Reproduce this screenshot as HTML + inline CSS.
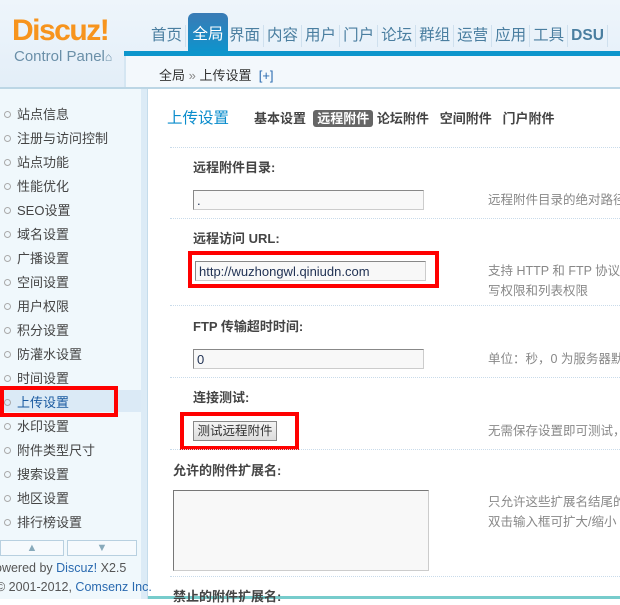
<!DOCTYPE html><html><head><meta charset="utf-8"><style>
*{margin:0;padding:0;box-sizing:border-box}
body{width:620px;height:599px;overflow:hidden;background:#fff;font:12px "Liberation Sans","Noto Sans CJK SC",sans-serif;color:#333;position:relative}
.a{position:absolute}
.hd{left:0;top:0;width:620px;height:88px;background:linear-gradient(#eef5fb,#e3eef8)}
.logo{left:12px;top:14px;font:bold 30px "Liberation Sans",sans-serif;color:#f7941d;letter-spacing:-1.5px}
.cp{left:14px;top:48px;font-size:15px;color:#6a8fa8}
.nav{left:148px;top:18px;font-size:15.5px;color:#4a7ea0;white-space:nowrap}
.nav span{display:inline-block;padding:0 3px;border-right:1px solid #cfe0ee;height:22px;line-height:22px}
.act{left:188px;top:13px;width:40px;height:38px;background:linear-gradient(#3a7bb5,#0f93cc);border-radius:6px 6px 0 0;color:#fff;font-size:15.5px;text-align:center;line-height:44px}
.bar{left:124px;top:51px;width:496px;height:5px;background:#0d96cc}
.bc{left:124px;top:56px;width:496px;height:32px;background:#f3f8fc;padding:9px 0 0 33px;font-size:13px;color:#333;border-left:2px solid #d5e6f2}
.hl{left:0;top:87px;width:620px;height:2px;background:#bcd6e5}
.sb{left:0;top:89px;width:141px;height:510px;background:#f0f8fc}
.strip{left:141px;top:89px;width:7px;height:510px;background:#dcebf6;border-right:1px solid #c5dceb}
.it{left:4px;font-size:13px;color:#444;white-space:nowrap}
.it i{display:inline-block;width:7px;height:7px;border:1px solid #aaa;border-radius:50%;margin-right:6px;vertical-align:1px}
.red{border:4px solid #f00}
.lab{font-weight:bold;font-size:13px;color:#444}
.inp{width:231px;height:20px;border:1px solid #888;border-right-color:#ccc;border-bottom-color:#ccc;background:#f8f8f8;font-size:13px;padding:2px 3px;color:#235}
.tip{left:488px;color:#888;font-size:12.5px;line-height:20px;white-space:nowrap}
.dot{left:170px;width:450px;border-top:1px dotted #c9dbea}
</style></head><body>
<div class="a hd"></div>
<div class="a logo">Discuz!</div>
<div class="a cp">Control Panel<span style="font-size:12px">⌂</span></div>
<div class="a bar"></div>
<div class="a nav"><span>首页</span><span style="width:40px;border:0"></span><span>界面</span><span>内容</span><span>用户</span><span>门户</span><span>论坛</span><span>群组</span><span>运营</span><span>应用</span><span>工具</span><span style="font-weight:bold">DSU</span></div>
<div class="a act">全局</div>
<div class="a bc">全局 <span style="color:#888">»</span> 上传设置 &nbsp;<span style="color:#2a6ab0">[+]</span></div>
<div class="a hl"></div>
<div class="a sb"></div>
<div class="a strip"></div>
<div class="a" style="left:0;top:390px;width:141px;height:22px;background:#dbeaf6"></div>
<div class="a it" style="top:104px"><i></i>站点信息</div>
<div class="a it" style="top:128px"><i></i>注册与访问控制</div>
<div class="a it" style="top:152px"><i></i>站点功能</div>
<div class="a it" style="top:176px"><i></i>性能优化</div>
<div class="a it" style="top:200px"><i></i>SEO设置</div>
<div class="a it" style="top:224px"><i></i>域名设置</div>
<div class="a it" style="top:248px"><i></i>广播设置</div>
<div class="a it" style="top:272px"><i></i>空间设置</div>
<div class="a it" style="top:296px"><i></i>用户权限</div>
<div class="a it" style="top:320px"><i></i>积分设置</div>
<div class="a it" style="top:344px"><i></i>防灌水设置</div>
<div class="a it" style="top:368px"><i></i>时间设置</div>
<div class="a it" style="top:392px;color:#1a5aa0"><i></i>上传设置</div>
<div class="a it" style="top:416px"><i></i>水印设置</div>
<div class="a it" style="top:440px"><i></i>附件类型尺寸</div>
<div class="a it" style="top:464px"><i></i>搜索设置</div>
<div class="a it" style="top:488px"><i></i>地区设置</div>
<div class="a it" style="top:512px"><i></i>排行榜设置</div>
<div class="a red" style="left:0;top:386px;width:118px;height:31px"></div>
<div class="a" style="left:0;top:540px;width:64px;height:16px;border:1px solid #b8d0e0;background:#f6fafd;color:#8ab;text-align:center;font-size:11px;line-height:14px">▲</div>
<div class="a" style="left:67px;top:540px;width:70px;height:16px;border:1px solid #b8d0e0;background:#f6fafd;color:#8ab;text-align:center;font-size:11px;line-height:14px">▼</div>
<div class="a" style="left:-5px;top:561px;font-size:12.5px;color:#555;white-space:nowrap">owered by <span style="color:#2a6ab0">Discuz!</span> X2.5</div>
<div class="a" style="left:-4px;top:580px;font-size:12.5px;color:#555;white-space:nowrap">© 2001-2012, <span style="color:#2a6ab0">Comsenz Inc.</span></div>
<div class="a" style="left:148px;top:596px;width:472px;height:3px;background:#7cc"></div>
<div class="a" style="left:167px;top:106px;font-size:15.5px;color:#0a8ccc">上传设置</div>
<div class="a" style="left:254px;top:108px;font-weight:bold;font-size:13px;color:#444;white-space:nowrap">基本设置 &nbsp;<span style="background:#666;color:#fff;border-radius:3px;padding:1px 4px">远程附件</span> 论坛附件 &nbsp; 空间附件 &nbsp; 门户附件</div>
<div class="a dot" style="top:147px"></div>
<div class="a lab" style="left:193px;top:157px">远程附件目录:</div>
<div class="a inp" style="left:193px;top:190px">.</div>
<div class="a tip" style="top:190px">远程附件目录的绝对路径</div>
<div class="a dot" style="top:218px"></div>
<div class="a lab" style="left:193px;top:228px">远程访问 URL:</div>
<div class="a inp" style="left:195px;top:261px">http://wuzhongwl.qiniudn.com</div>
<div class="a red" style="left:188px;top:251px;width:251px;height:37px"></div>
<div class="a tip" style="top:261px">支持 HTTP 和 FTP 协议<br>写权限和列表权限</div>
<div class="a dot" style="top:305px"></div>
<div class="a lab" style="left:193px;top:316px">FTP 传输超时时间:</div>
<div class="a inp" style="left:193px;top:349px">0</div>
<div class="a tip" style="top:349px">单位：秒，0 为服务器默</div>
<div class="a dot" style="top:377px"></div>
<div class="a lab" style="left:193px;top:387px">连接测试:</div>
<div class="a" style="left:193px;top:421px;width:84px;height:20px;border:1px solid #888;background:linear-gradient(#f4f4f4,#ddd);font-size:12.5px;text-align:center;line-height:18px">测试远程附件</div>
<div class="a red" style="left:180px;top:412px;width:119px;height:38px"></div>
<div class="a tip" style="top:421px">无需保存设置即可测试，</div>
<div class="a dot" style="top:449px"></div>
<div class="a lab" style="left:173px;top:460px">允许的附件扩展名:</div>
<div class="a" style="left:173px;top:490px;width:256px;height:81px;border:1px solid #777;border-right-color:#ccc;border-bottom-color:#ccc;background:#f8f8f8"></div>
<div class="a tip" style="top:492px">只允许这些扩展名结尾的<br>双击输入框可扩大/缩小</div>
<div class="a dot" style="top:576px"></div>
<div class="a lab" style="left:173px;top:586px">禁止的附件扩展名:</div>
</body></html>
